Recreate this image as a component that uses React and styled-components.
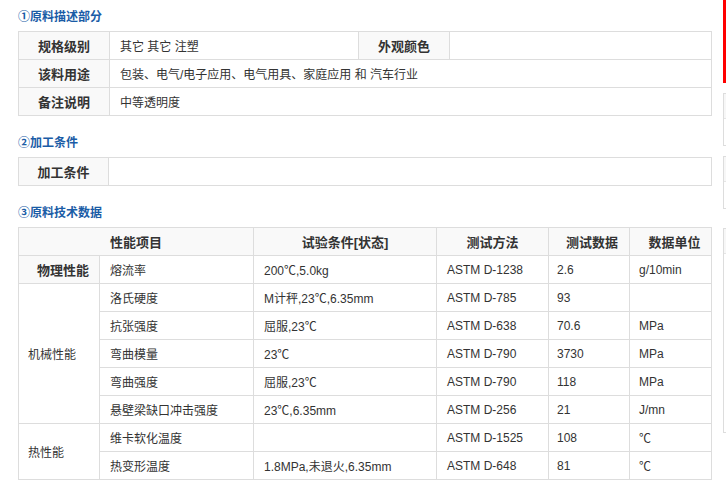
import React from "react";
import styled, { createGlobalStyle } from "styled-components";

const GlobalStyle = createGlobalStyle`
  html, body { margin: 0; padding: 0; background: #fff; overflow: hidden; }
  body {
    font-family: "Liberation Sans", "Noto Sans CJK SC", sans-serif;
    font-size: 12px;
    color: #333;
  }
`;

const Page = styled.div`
  display: flex;
  align-items: flex-start;
  width: 940px;
`;

const Main = styled.div`
  width: 693px;
  padding: 7px 0 0 18px;
`;

const Section = styled.section`
  margin-bottom: 17px;
`;

const Title = styled.h3`
  margin: 0 0 4px;
  height: 20px;
  line-height: 20px;
  font-size: 12px;
  font-weight: bold;
  color: #1a5ca6;
`;

const Table = styled.table`
  width: 693px;
  border-collapse: collapse;
  table-layout: fixed;
`;

const Col = styled.col`
  width: ${p => p.$w}px;
`;

const Row = styled.tr`
  height: 28px;
`;

const Th = styled.th`
  border: 1px solid #ddd;
  background: #f9f9f9;
  font-size: 13px;
  font-weight: bold;
  color: #333;
  text-align: center;
  padding: 0 0 0 ${p => p.$pl || 0}px;
  white-space: nowrap;
`;

const Td = styled.td`
  border: 1px solid #ddd;
  padding: 0 ${p => p.$pl ?? 10}px;
  text-align: left;
  color: #333;
  white-space: nowrap;
`;

const Side = styled.aside`
  margin-left: 12px;
  width: 200px;
  display: flex;
  flex-direction: column;
`;

const RedBar = styled.div`
  height: 83px;
  background: #f00;
`;

const Box = styled.div`
  margin-top: ${p => p.$top}px;
  height: ${p => p.$h}px;
  border: 1px solid #ddd;
  box-sizing: border-box;
`;

const BoxHead = styled.div`
  height: 24px;
  background: #f7f7f7;
  border-bottom: 1px solid #e5e5e5;
`;

const techRows = [
  { group: "物理性能", head: true, span: 1, name: "熔流率", cond: "200℃,5.0kg", method: "ASTM D-1238", value: "2.6", unit: "g/10min" },
  { group: "机械性能", span: 5, name: "洛氏硬度", cond: "M计秤,23℃,6.35mm", method: "ASTM D-785", value: "93", unit: "" },
  { name: "抗张强度", cond: "屈服,23℃", method: "ASTM D-638", value: "70.6", unit: "MPa" },
  { name: "弯曲模量", cond: "23℃", method: "ASTM D-790", value: "3730", unit: "MPa" },
  { name: "弯曲强度", cond: "屈服,23℃", method: "ASTM D-790", value: "118", unit: "MPa" },
  { name: "悬壁梁缺口冲击强度", cond: "23℃,6.35mm", method: "ASTM D-256", value: "21", unit: "J/mn" },
  { group: "热性能", span: 2, name: "维卡软化温度", cond: "", method: "ASTM D-1525", value: "108", unit: "℃" },
  { name: "热变形温度", cond: "1.8MPa,未退火,6.35mm", method: "ASTM D-648", value: "81", unit: "℃" },
];

export default function App() {
  return (
    <Page>
      <GlobalStyle />
      <Main>
        <Section>
          <Title>①原料描述部分</Title>
          <Table>
            <colgroup>
              <Col $w={91} />
              <Col $w={249} />
              <Col $w={91} />
              <Col $w={262} />
            </colgroup>
            <tbody>
              <Row>
                <Th>规格级别</Th>
                <Td>其它 其它 注塑</Td>
                <Th>外观颜色</Th>
                <Td></Td>
              </Row>
              <Row>
                <Th>该料用途</Th>
                <Td colSpan={3}>包装、电气/电子应用、电气用具、家庭应用 和 汽车行业</Td>
              </Row>
              <Row>
                <Th>备注说明</Th>
                <Td colSpan={3}>中等透明度</Td>
              </Row>
            </tbody>
          </Table>
        </Section>

        <Section>
          <Title>②加工条件</Title>
          <Table>
            <colgroup>
              <Col $w={90} />
              <Col $w={603} />
            </colgroup>
            <tbody>
              <Row>
                <Th>加工条件</Th>
                <Td></Td>
              </Row>
            </tbody>
          </Table>
        </Section>

        <Section>
          <Title>③原料技术数据</Title>
          <Table>
            <colgroup>
              <Col $w={81} />
              <Col $w={154} />
              <Col $w={183} />
              <Col $w={112} />
              <Col $w={81} />
              <Col $w={82} />
            </colgroup>
            <tbody>
              <Row>
                <Th colSpan={2}>性能项目</Th>
                <Th>试验条件[状态]</Th>
                <Th>测试方法</Th>
                <Th $pl={6}>测试数据</Th>
                <Th $pl={8}>数据单位</Th>
              </Row>
              {techRows.map((r, i) => (
                <Row key={i}>
                  {r.group &&
                    (r.head ? (
                      <Th rowSpan={r.span} $pl={8}>{r.group}</Th>
                    ) : (
                      <Td rowSpan={r.span} $pl={9}>{r.group}</Td>
                    ))}
                  <Td>{r.name}</Td>
                  <Td>{r.cond}</Td>
                  <Td>{r.method}</Td>
                  <Td $pl={8}>{r.value}</Td>
                  <Td $pl={9}>{r.unit}</Td>
                </Row>
              ))}
            </tbody>
          </Table>
        </Section>
      </Main>

      <Side>
        <RedBar />
        <Box $top={10} $h={53}><BoxHead /></Box>
        <Box $top={10} $h={53}><BoxHead /></Box>
        <Box $top={19} $h={205}><BoxHead /></Box>
      </Side>
    </Page>
  );
}
